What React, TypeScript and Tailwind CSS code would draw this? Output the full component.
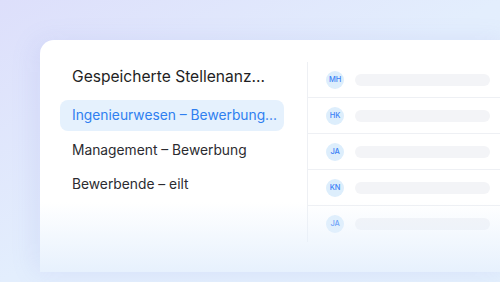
import React from "react"

const rows = ["MH", "HK", "JA", "KN", "JA"]

function Avatar({ initials }: { initials: string }) {
  return (
    <div className="flex size-[18px] shrink-0 items-center justify-center rounded-full bg-[#ddeefc] text-[7.5px] font-medium tracking-tight text-[#3b82f6]">
      {initials}
    </div>
  )
}

export default function App() {
  return (
    <div
      className="h-[282px] w-[500px] overflow-hidden bg-gradient-to-br from-[#dddffb] via-[#e3eefd] to-[#e4f0fd] pl-[40px] pt-[40px]"
      style={{ fontFamily: "Inter, 'Noto Sans', sans-serif" }}
    >
      <div className="relative flex h-[232px] w-[470px] rounded-tl-[14px] bg-white shadow-[-6px_0_24px_rgba(120,130,220,0.12)]">
        <div className="w-[267px] shrink-0 whitespace-nowrap pl-[20px] pt-[26px]">
          <div className="pl-[12px] text-[15.6px] leading-[22px] text-[#1f1f24]">
            Gespeicherte Stellenanz...
          </div>
          <div className="mt-[12px] flex h-[31px] w-[224px] items-center rounded-[8px] bg-[#e5f1fd] pl-[12px] text-[13.8px] text-[#2f7ff0]">
            Ingenieurwesen – Bewerbung...
          </div>
          <div className="mt-[4px] flex h-[30px] items-center pl-[12px] text-[13.8px] text-[#2b2b30]">
            Management – Bewerbung
          </div>
          <div className="mt-[4px] flex h-[30px] items-center pl-[12px] text-[13.8px] text-[#2b2b30]">
            Bewerbende – eilt
          </div>
        </div>
        <div className="mt-[22px] h-[180px] flex-1 border-l border-[#eef0f4]">
          {rows.map((r, i) => (
            <div
              key={i}
              className={`flex h-[36px] items-center gap-[11px] pl-[18px] ${i < rows.length - 1 ? "border-b border-[#eef0f4]" : ""}`}
            >
              <Avatar initials={r} />
              <div className="h-[12px] w-[135px] rounded-full bg-[#f3f4f7]" />
            </div>
          ))}
        </div>
        <div className="pointer-events-none absolute inset-x-0 bottom-0 h-[70px] bg-gradient-to-b from-white/0 to-[#e7f1fd]" />
      </div>
    </div>
  )
}
